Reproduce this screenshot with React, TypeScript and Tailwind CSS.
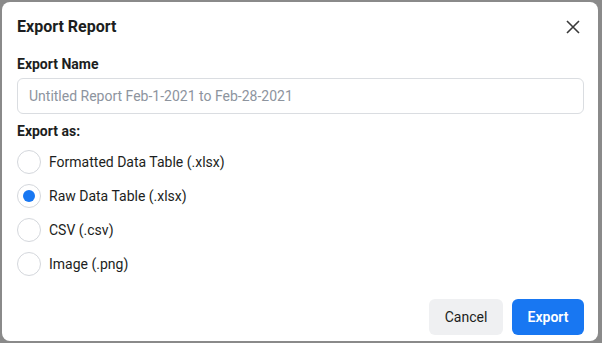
import { useState } from "react";

const options = [
    "Formatted Data Table (.xlsx)",
    "Raw Data Table (.xlsx)",
    "CSV (.csv)",
    "Image (.png)",
];

const App = () => {
    const [selected, setSelected] = useState(1);

    return (
        <div
            className="w-[602px] h-[343px] bg-[#8a8a8a] pt-[2px] pl-[2px]"
            style={{ fontFamily: "Roboto, 'Liberation Sans', sans-serif" }}
        >
            <div className="w-[596px] h-[339px] bg-white rounded-[8px] flex flex-col pl-[15px] pr-[14px]">
                <div className="h-[50px] flex items-center justify-between">
                    <h1 className="text-[16px] font-bold text-[#1c1e21]">Export Report</h1>
                    <button className="w-[24px] h-[24px] flex items-center justify-center mr-[-1px]">
                        <svg width="14" height="14" viewBox="0 0 14 14">
                            <path d="M1 1 L13 13 M13 1 L1 13" stroke="#3a3a3a" strokeWidth="1.6" />
                        </svg>
                    </button>
                </div>
                <div className="pt-[2px] text-[14px] leading-[20px] font-bold text-[#1c1e21]">
                    Export Name
                </div>
                <input
                    className="mt-[4px] h-[36px] w-full rounded-[6px] border border-[#dadde1] px-[11px] text-[14px] text-[#1c1e21] placeholder:text-[#8d949e] outline-none"
                    placeholder="Untitled Report Feb-1-2021 to Feb-28-2021"
                />
                <div className="mt-[7px] text-[14px] leading-[20px] font-bold text-[#1c1e21]">
                    Export as:
                </div>
                <div className="mt-[4px] flex flex-col">
                    {options.map((label, i) => (
                        <label
                            key={label}
                            className="h-[34px] flex items-center gap-[8px] cursor-pointer"
                            onClick={() => setSelected(i)}
                        >
                            <span className="w-[24px] h-[24px] rounded-full border border-[#d4d7dc] flex items-center justify-center">
                                {selected === i && (
                                    <span className="w-[12px] h-[12px] rounded-full bg-[#1877f2]" />
                                )}
                            </span>
                            <span className="text-[14px] text-[#1c1e21]">{label}</span>
                        </label>
                    ))}
                </div>
                <div className="mt-auto mb-[6px] flex justify-end gap-[9px]">
                    <button className="h-[36px] w-[74px] rounded-[6px] bg-[#eff0f2] text-[14px] text-[#1c1e21]">
                        Cancel
                    </button>
                    <button className="h-[36px] w-[72px] rounded-[6px] bg-[#1877f2] text-[14px] font-semibold text-white">
                        Export
                    </button>
                </div>
            </div>
        </div>
    );
};

export default App;
